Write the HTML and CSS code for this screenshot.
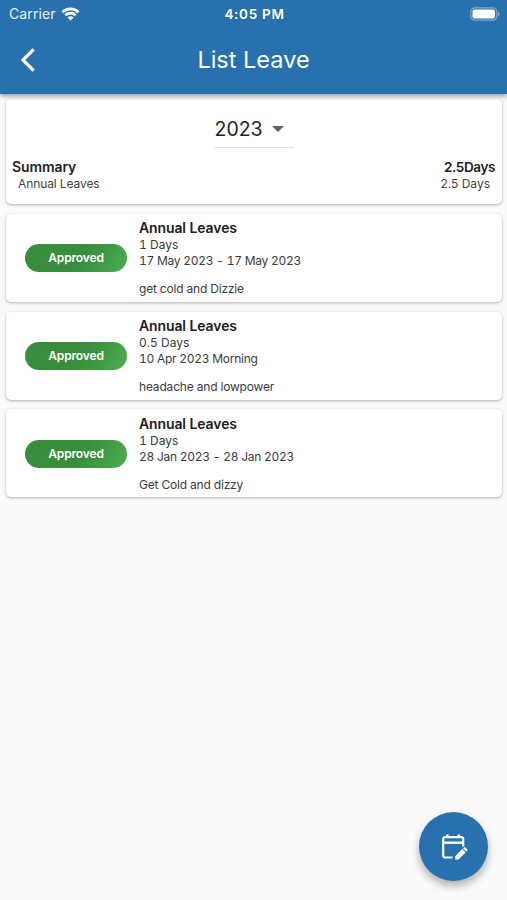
FILE: index.html
```
<!DOCTYPE html>
<html lang="en">
<head>
    <meta charset="UTF-8">
    <meta name="viewport" content="width=device-width, initial-scale=1.0">
    <title>List Leave</title>
    <link rel="stylesheet" href="styles.css">
</head>
<body>
    <header class="header">
        <div class="status-bar">
            <div class="carrier">
                <span>Carrier</span>
                <svg width="19" height="14" viewBox="0 0 18 14" fill="none" stroke="#fff" stroke-width="2.7">
                    <path d="M1 5.2a11.4 11.4 0 0 1 16 0"/>
                    <path d="M3.9 8.3a7.3 7.3 0 0 1 10.2 0"/>
                    <path d="M9 13.5L6 10.6a4.4 4.4 0 0 1 6 0z" fill="#fff" stroke="none"/>
                </svg>
            </div>
            <span class="time">4:05 PM</span>
            <svg class="battery" width="30" height="14" viewBox="0 0 30 14">
                <rect x=".8" y=".8" width="26" height="12.4" rx="4" fill="none" stroke="#fff" stroke-opacity=".4" stroke-width="1.2"/>
                <rect x="2.5" y="2.5" width="22.5" height="9" rx="2" fill="#fff"/>
                <path d="M28 4.7c2 .7 2 3.9 0 4.6z" fill="#fff" fill-opacity=".4"/>
            </svg>
        </div>
        <div class="nav-bar">
            <svg class="back" width="16" height="24" viewBox="0 0 16 24" fill="none" stroke="#fff" stroke-width="3.2">
                <path d="M13.6 1.4L3 12l10.6 10.6"/>
            </svg>
            <h1>List Leave</h1>
        </div>
    </header>

    <main class="content">
        <section class="card summary">
            <div class="year">
                <span>2023</span>
                <svg width="12" height="6" viewBox="0 0 12 6"><path d="M0 0h12L6 6z" fill="#616161"/></svg>
            </div>
            <div class="summary-row summary-total">
                <span>Summary</span>
                <span class="total-days">2.5Days</span>
            </div>
            <div class="summary-row summary-item">
                <span class="item-name">Annual Leaves</span>
                <span>2.5 Days</span>
            </div>
        </section>

        <section class="card leave">
            <div class="badge">Approved</div>
            <div class="info">
                <h2>Annual Leaves</h2>
                <p>1 Days</p>
                <p class="date">17 May 2023 - 17 May 2023</p>
                <p class="reason">get cold and Dizzie</p>
            </div>
        </section>

        <section class="card leave">
            <div class="badge">Approved</div>
            <div class="info">
                <h2>Annual Leaves</h2>
                <p>0.5 Days</p>
                <p class="date">10 Apr 2023 Morning</p>
                <p class="reason">headache and lowpower</p>
            </div>
        </section>

        <section class="card leave">
            <div class="badge">Approved</div>
            <div class="info">
                <h2>Annual Leaves</h2>
                <p>1 Days</p>
                <p class="date">28 Jan 2023 - 28 Jan 2023</p>
                <p class="reason">Get Cold and dizzy</p>
            </div>
        </section>
    </main>

    <button class="fab" aria-label="Request leave">
        <svg width="28" height="28" viewBox="0 0 28 28" fill="none" stroke="#fff" stroke-width="2.2">
            <path d="M12.5 24.5H5.200a2 2 0 0 1-2-2V6.100a2 2 0 0 1 2-2h16a2 2 0 0 1 2 2v7.400"/>
            <path d="M3.200 9.700h20" stroke-width="2.400"/>
            <path d="M7.400 1.600v3M18.800 1.600v3" stroke-width="2.600"/>
            <path d="M15.200 26.600v-3.400l7.100-7.100 3.300 3.300-7.100 7.200z" fill="#fff" stroke="none"/>
            <path d="M23 15.400l.9-.9c.5-.5 1-.5 1.500 0l1.800 1.800c.5.500.5 1 0 1.500l-.9.900z" fill="#fff" stroke="none"/>
        </svg>
    </button>
</body>
</html>
```

FILE: styles.css
```
* {
    box-sizing: border-box;
}
body {
    margin: 0;
    height: 900px;
    background-color: #fafafa;
    font-family: Inter, "Liberation Sans", sans-serif;
    color: #222;
    overflow: hidden;
}
h1, h2, p {
    margin: 0;
    font-weight: normal;
}
svg {
    display: block;
}
.header {
    position: relative;
    z-index: 1;
    height: 94px;
    background-color: #2772ae;
    color: #fff;
    box-shadow: 0 2px 5px rgba(0, 0, 0, 0.4);
}
.status-bar {
    display: grid;
    grid-template-columns: 1fr auto 1fr;
    align-items: center;
    height: 27px;
    padding: 0 7px 0 9px;
    font-size: 14px;
}
.carrier {
    display: flex;
    align-items: center;
    gap: 5px;
    color: #e6eff7;
    letter-spacing: 0.1px;
}
.time {
    font-weight: 600;
    font-size: 13.5px;
    letter-spacing: 0.7px;
}
.battery {
    justify-self: end;
}
.nav-bar {
    display: grid;
    grid-template-columns: 1fr auto 1fr;
    align-items: center;
    height: 65px;
    padding: 0 20px;
}
.nav-bar h1 {
    font-size: 23.5px;
}
.content {
    display: flex;
    flex-direction: column;
    gap: 9.75px;
    padding: 5px 5px 0 6px;
}
.card {
    background-color: #fff;
    border-radius: 5px;
    box-shadow: 0 1px 3px rgba(0, 0, 0, 0.3);
}
.summary {
    height: 105px;
    padding: 9px 7px 0 6px;
}
.year {
    display: flex;
    align-items: center;
    gap: 9px;
    width: 80px;
    height: 40px;
    margin: 0 auto 10px;
    padding: 2px 0 0 1px;
    border-bottom: 1px solid #e2e2e2;
    font-size: 19.5px;
}
.summary-row {
    display: flex;
    justify-content: space-between;
}
.summary-total {
    font-size: 14px;
    font-weight: 600;
    line-height: 18px;
    letter-spacing: -0.1px;
}
.total-days {
    font-size: 13.5px;
    letter-spacing: -0.4px;
}
.summary-item {
    padding: 0 5px 0 6px;
    font-size: 12px;
    line-height: 16px;
    color: #444;
}
.item-name {
    letter-spacing: -0.1px;
}
.leave {
    display: flex;
    align-items: center;
    gap: 12px;
    height: 88px;
    padding: 1px 0 0 19px;
}
.badge {
    width: 102px;
    height: 28px;
    border-radius: 14px;
    background: linear-gradient(120deg, #388e3c 55%, #4caf50);
    color: #fff;
    font-size: 12px;
    font-weight: 600;
    line-height: 28px;
    letter-spacing: -0.15px;
    text-align: center;
}
.info {
    font-size: 12px;
    line-height: 16px;
    color: #3c3c3c;
    font-variant-numeric: tabular-nums;
}
.info h2 {
    margin-bottom: 1px;
    font-size: 14px;
    font-weight: 600;
    line-height: 17px;
    letter-spacing: -0.12px;
    color: #1c1c1c;
}
.info .date {
    letter-spacing: -0.27px;
}
.info .reason {
    margin-top: 12px;
    letter-spacing: -0.17px;
}
.fab {
    position: fixed;
    right: 19px;
    bottom: 19px;
    display: flex;
    align-items: center;
    justify-content: center;
    width: 69px;
    height: 69px;
    border: none;
    border-radius: 50%;
    background-color: #2772ae;
    box-shadow: 0 5px 9px rgba(0, 0, 0, 0.3);
}
```
